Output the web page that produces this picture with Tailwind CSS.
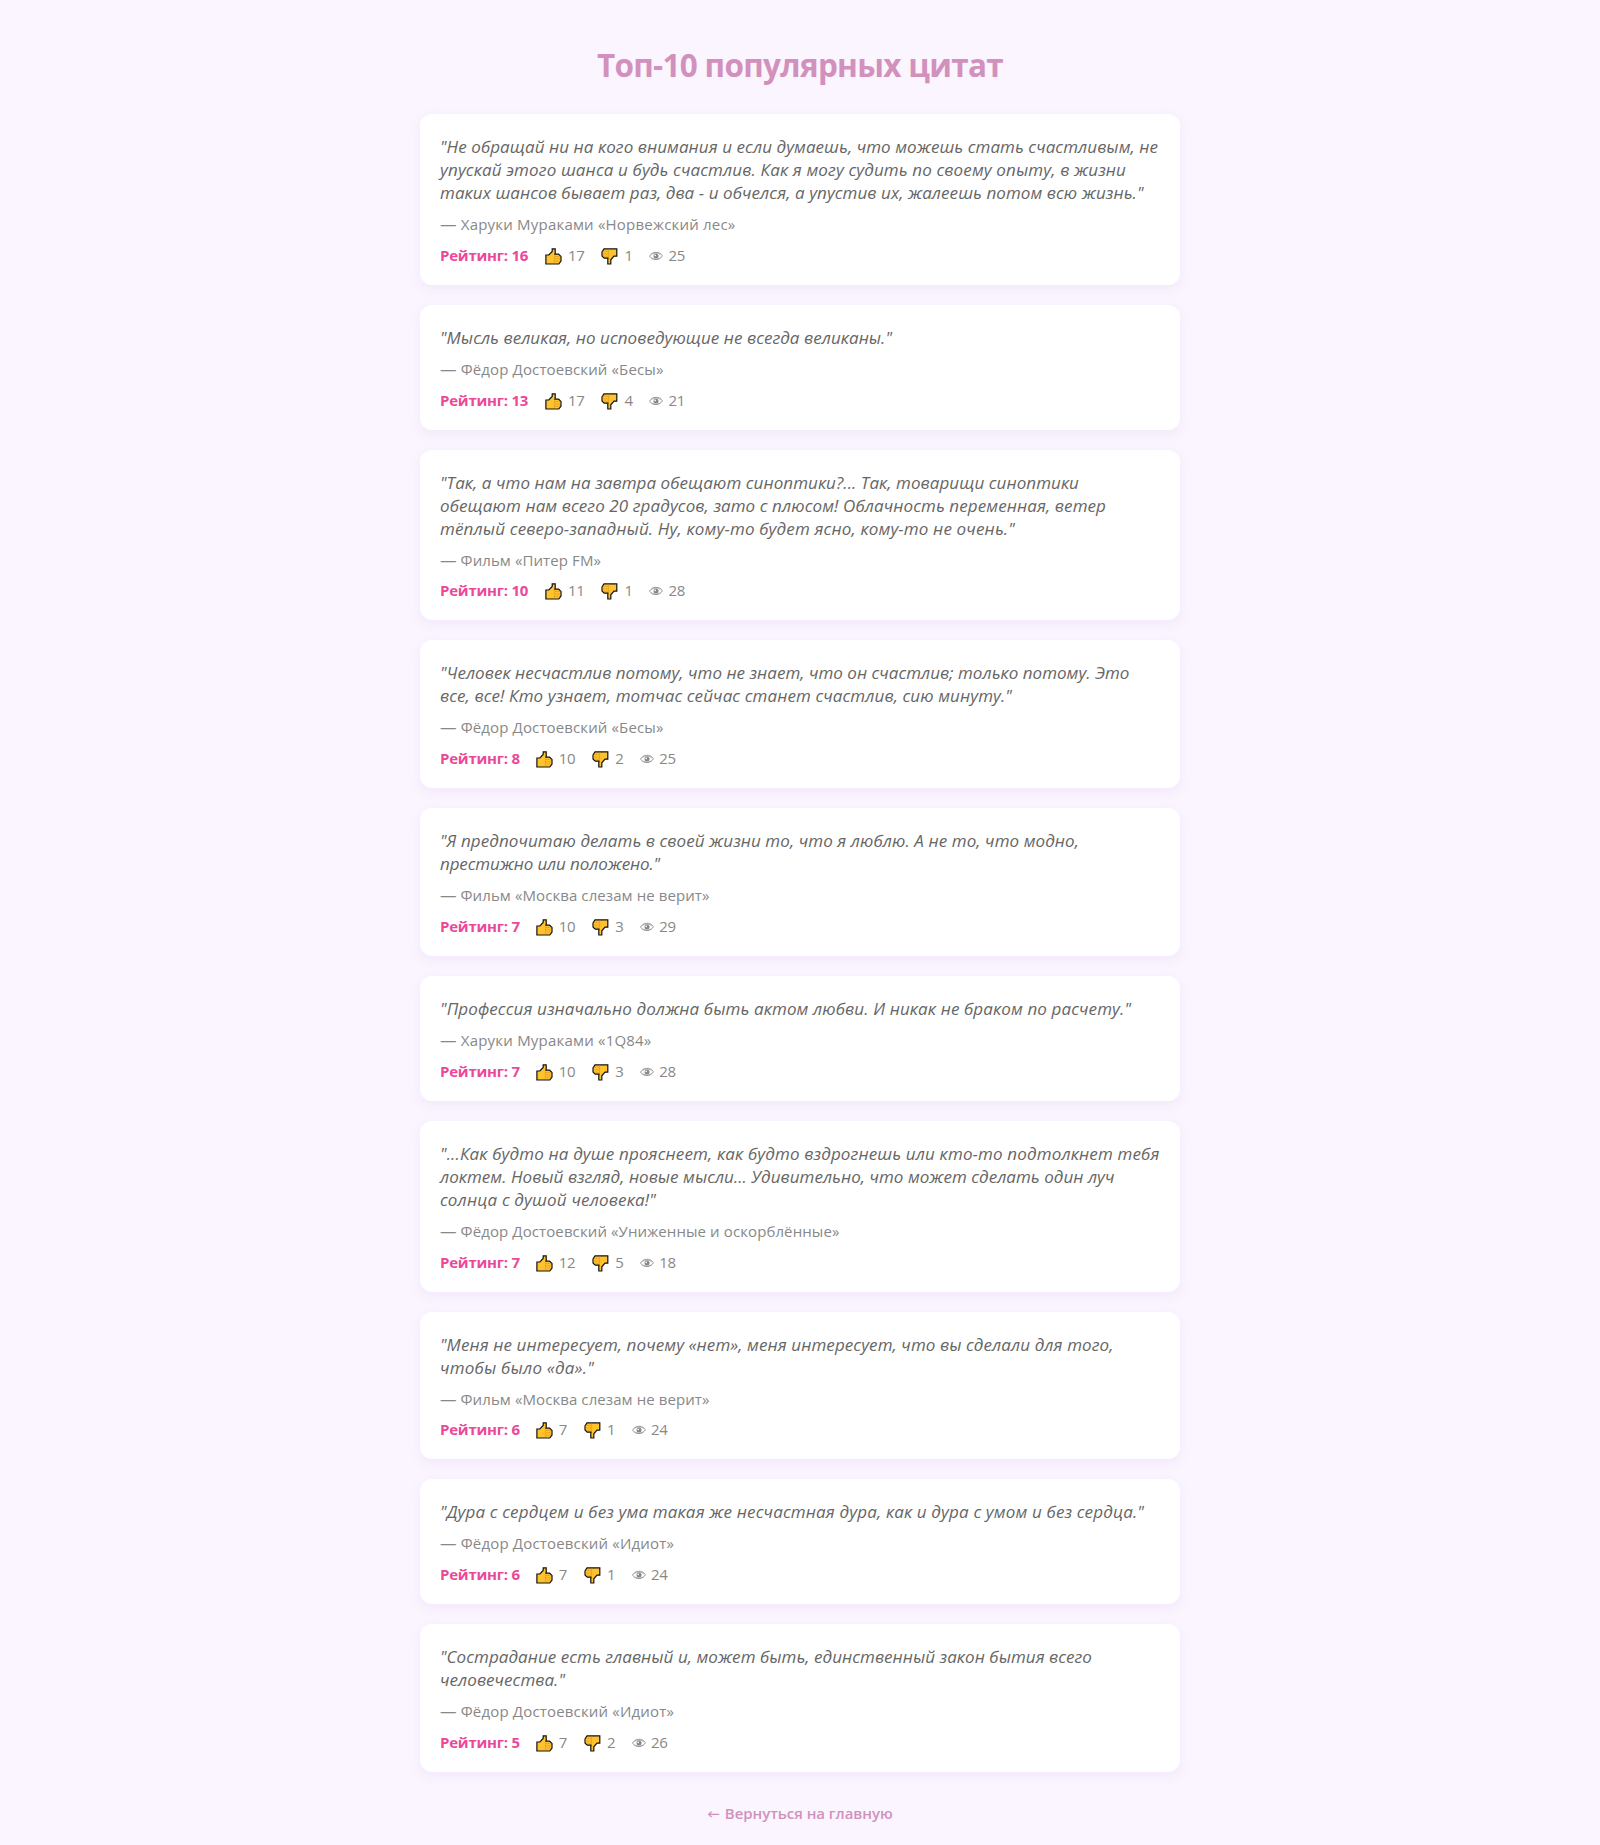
<!DOCTYPE html>
<html lang="ru">
<head>
<meta charset="utf-8">
<title>Топ-10 популярных цитат</title>
<script src="https://cdn.jsdelivr.net/npm/@tailwindcss/browser@4"></script>
</head>
<body class="bg-[#faf5ff] font-['Open_Sans',sans-serif] text-[#666]">
<svg class="hidden">
  <symbol id="up" viewBox="0 0 17 17">
    <path d="M.9 7H3.8L7.2 3.4V.9H10.2V5.2L9.9 6.2H13.6L16 8.6V13L13.8 16H.9Z" fill="#ffc32e" stroke="#111" stroke-width="1.2"/>
    <path d="M10 8.4H15.4M10 10.8H15.4M10 13.2H15M9.4 7.4V15.2" fill="none" stroke="#e39a1c" stroke-width=".7"/>
  </symbol>
  <symbol id="down" viewBox="0 0 17 17">
    <path d="M3 .9H15.8V8.2H13L9.8 11.8V16H6.8V11.6L7 10.2H3.2L1 8V4Z" fill="#ffc32e" stroke="#111" stroke-width="1.2"/>
    <path d="M1.6 3.4H7M1.6 5.8H7M2 8.2H7M7.6 1.6V9.2" fill="none" stroke="#e39a1c" stroke-width=".7"/>
  </symbol>
  <symbol id="eye" viewBox="0 0 14 10">
    <path d="M.6 5.2C3 .2 10.6 0 13.4 4.8C10.8 9.6 3.4 9.8 .6 5.2Z" fill="none" stroke="#888" stroke-width=".9"/>
    <circle cx="7" cy="5" r="2.5" fill="#888"/>
    <circle cx="6.2" cy="4.4" r=".8" fill="#fff"/>
    <path d="M2.6 3.4C5 1.6 9 1.6 11.4 3.4M3 7C5 8.4 9 8.4 11 7" fill="none" stroke="#999" stroke-width=".7"/>
  </symbol>
</svg>
<main class="mx-auto w-[760px] pt-[40.2px]">
  <h1 class="mb-5 h-[54px] text-center text-[31.5px] leading-[50px] font-bold tracking-[-0.7px] text-[#d291bc]">Топ-10 популярных цитат</h1>
  <div id="list" class="flex flex-col gap-5"></div>
  <div class="mt-[30px] flex h-[43px] justify-center text-[15px] leading-[22px] font-semibold text-[#d291bc]"><a href="#" class="tracking-[-0.05px]"><span class="mr-[5px] font-['DejaVu_Sans'] text-[15px] font-normal">←</span>Вернуться на главную</a></div>
</main>
<script>
// Each line of text carries the width in pixels it is tracked to.
const quotes = [
  [[['"Не обращай ни на кого внимания и если думаешь, что можешь стать счастливым, не', 718], ['упускай этого шанса и будь счастлив. Как я могу судить по своему опыту, в жизни', 686], ['таких шансов бывает раз, два - и обчелся, а упустив их, жалеешь потом всю жизнь."', 703.5]], ['Харуки Мураками «Норвежский лес»', 295.5], 16, 17, 1, 25],
  [[['"Мысль великая, но исповедующие не всегда великаны."', 452]], ['Фёдор Достоевский «Бесы»', 223.5], 13, 17, 4, 21],
  [[['"Так, а что нам на завтра обещают синоптики?... Так, товарищи синоптики', 639], ['обещают нам всего 20 градусов, зато с плюсом! Облачность переменная, ветер', 666], ['тёплый северо-западный. Ну, кому-то будет ясно, кому-то не очень."', 575]], ['Фильм «Питер FM»', 161], 10, 11, 1, 28],
  [[['"Человек несчастлив потому, что не знает, что он счастлив; только потому. Это', 689.5], ['все, все! Кто узнает, тотчас сейчас станет счастлив, сию минуту."', 572]], ['Фёдор Достоевский «Бесы»', 223.5], 8, 10, 2, 25],
  [[['"Я предпочитаю делать в своей жизни то, что я люблю. А не то, что модно,', 639], ['престижно или положено."', 220]], ['Фильм «Москва слезам не верит»', 269.5], 7, 10, 3, 29],
  [[['"Профессия изначально должна быть актом любви. И никак не браком по расчету."', 691]], ['Харуки Мураками «1Q84»', 211.5], 7, 10, 3, 28],
  [[['"...Как будто на душе прояснеет, как будто вздрогнешь или кто-то подтолкнет тебя', 719.5], ['локтем. Новый взгляд, новые мысли... Удивительно, что может сделать один луч', 674.5], ['солнца с душой человека!"', 216]], ['Фёдор Достоевский «Униженные и оскорблённые»', 399.5], 7, 12, 5, 18],
  [[['"Меня не интересует, почему «нет», меня интересует, что вы сделали для того,', 673.5], ['чтобы было «да»."', 154]], ['Фильм «Москва слезам не верит»', 269.5], 6, 7, 1, 24],
  [[['"Дура с сердцем и без ума такая же несчастная дура, как и дура с умом и без сердца."', 704]], ['Фёдор Достоевский «Идиот»', 234], 6, 7, 1, 24],
  [[['"Сострадание есть главный и, может быть, единственный закон бытия всего', 652], ['человечества."', 125]], ['Фёдор Достоевский «Идиот»', 234], 5, 7, 2, 26],
];
document.getElementById('list').innerHTML = quotes.map(([lines, [author, aw], rating, up, down, views]) => `
  <article class="rounded-xl bg-white p-5 shadow-[0_4px_12px_rgba(200,160,220,0.15)]">
    <p class="pt-px text-[17px] leading-[23px] whitespace-nowrap italic">${lines.map(([t, w]) => `<span data-width="${w}">${t}</span>`).join('<br>')}</p>
    <p class="mt-[10px] h-[20.78px] text-[15px] leading-[21px] text-[#888] whitespace-nowrap"><span data-width="${aw}"><span class="inline-block origin-left scale-x-[1.1] pr-[1.5px]">—</span> ${author}</span></p>
    <div class="mt-[10px] -mb-px flex h-[21px] text-[15px] leading-[21px] tracking-[-0.35px] text-[#888]">
      <b class="${rating > 9 ? 'w-[89.4px]' : 'w-[80.2px]'} font-bold tracking-[-0.22px] whitespace-nowrap text-[#ec4899]">Рейтинг: ${rating}</b>
      <span class="ml-4 flex"><svg class="mt-[3px] mr-[5.6px] size-[17px]"><use href="#up"/></svg>${up}</span>
      <span class="ml-[17px] flex"><svg class="mt-[3px] mr-[6px] size-[17px]"><use href="#down"/></svg>${down}</span>
      <span class="ml-[16.8px] flex"><svg class="mt-[6px] mr-[5px] h-[10px] w-[14px]"><use href="#eye"/></svg>${views}</span>
    </div>
  </article>`).join('');

function fitLines() {
  document.querySelectorAll('[data-width]').forEach(el => {
    el.style.letterSpacing = '0px';
    const extra = el.dataset.width - el.getBoundingClientRect().width;
    el.style.letterSpacing = (extra / el.textContent.length).toFixed(3) + 'px';
  });
}
fitLines();
window.addEventListener('load', fitLines);
new ResizeObserver(fitLines).observe(document.getElementById('list'));
</script>
</body>
</html>
